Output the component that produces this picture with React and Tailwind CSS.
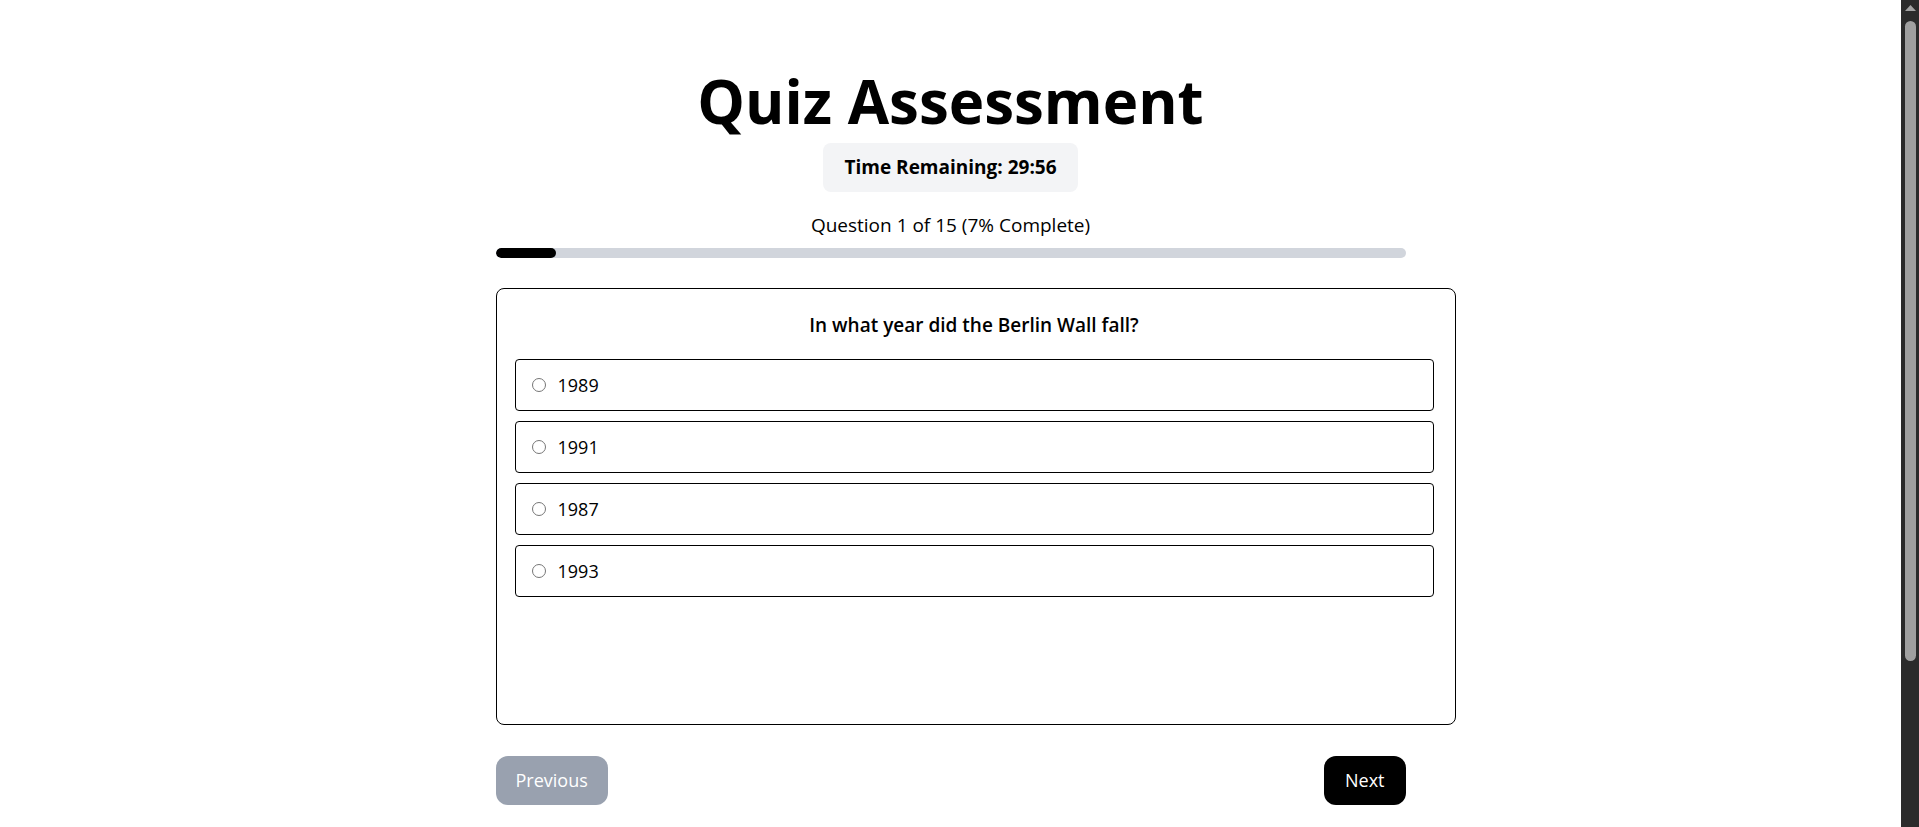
import { useState } from 'react';

const options = ['1989', '1991', '1987', '1993'];

const Scrollbar = () => (
    <div className="w-[18px] shrink-0 bg-[#2b2b2b] flex flex-col items-center">
        <svg width="11" height="7" viewBox="0 0 11 7" className="mt-[5px]">
            <polygon points="5.5,0 11,6 0,6" fill="#a3a3a3" />
        </svg>
        <div className="mt-[9px] w-[11px] h-[640px] rounded-full bg-[#a0a0a0]" />
    </div>
);

const QuizAssessment = () => {
    const [selected, setSelected] = useState(null);
    const current = 1;
    const total = 15;

    return (
        <div className="w-[910px] mx-auto pt-[71px] pb-16 flex flex-col">
            <h1 className="text-[60px] font-bold leading-none text-center">Quiz Assessment</h1>

            <div className="mt-3 self-center bg-gray-100 rounded-lg px-[21px] py-[10px] text-[19px] leading-[29px] font-bold">
                Time Remaining: 29:56
            </div>

            {/* Progress */}
            <p className="mt-[19px] text-[19px] leading-7 text-center">
                Question {current} of {total} (7% Complete)
            </p>
            <div className="mt-[9px] h-2.5 w-full bg-gray-300 rounded-full overflow-hidden">
                <div className="h-full bg-black rounded-full" style={{ width: `${(current / total) * 100}%` }} />
            </div>

            {/* Question card */}
            <div className="mt-[30px] w-[960px] h-[437px] shrink-0 border border-black rounded-lg pt-[22px] pl-[18px] pr-[21px]">
                <h2 className="text-[19px] leading-7 font-semibold text-center">In what year did the Berlin Wall fall?</h2>
                <div className="mt-5 flex flex-col gap-2.5">
                    {options.map((opt) => (
                        <label
                            key={opt}
                            className="flex items-center gap-3 border border-black rounded px-4 py-[11px] text-lg cursor-pointer"
                        >
                            <input
                                type="radio"
                                name="answer"
                                checked={selected === opt}
                                onChange={() => setSelected(opt)}
                                className="appearance-none w-[14px] h-[14px] rounded-full border border-[#767676] bg-white checked:border-[4px] checked:border-blue-600"
                            />
                            <span className="leading-7">{opt}</span>
                        </label>
                    ))}
                </div>
            </div>

            <div className="mt-[31px] flex justify-between">
                <button className="bg-gray-400 text-white text-lg leading-[29px] rounded-xl px-5 py-[10px]" disabled>
                    Previous
                </button>
                <button className="bg-black text-white text-lg leading-[29px] rounded-xl px-[21px] py-[10px]">Next</button>
            </div>
        </div>
    );
};

export default function App() {
    return (
        <div className="h-screen flex overflow-hidden bg-white text-black font-['Open_Sans',sans-serif]">
            <main className="flex-1 overflow-hidden">
                <QuizAssessment />
            </main>
            <Scrollbar />
        </div>
    );
}
